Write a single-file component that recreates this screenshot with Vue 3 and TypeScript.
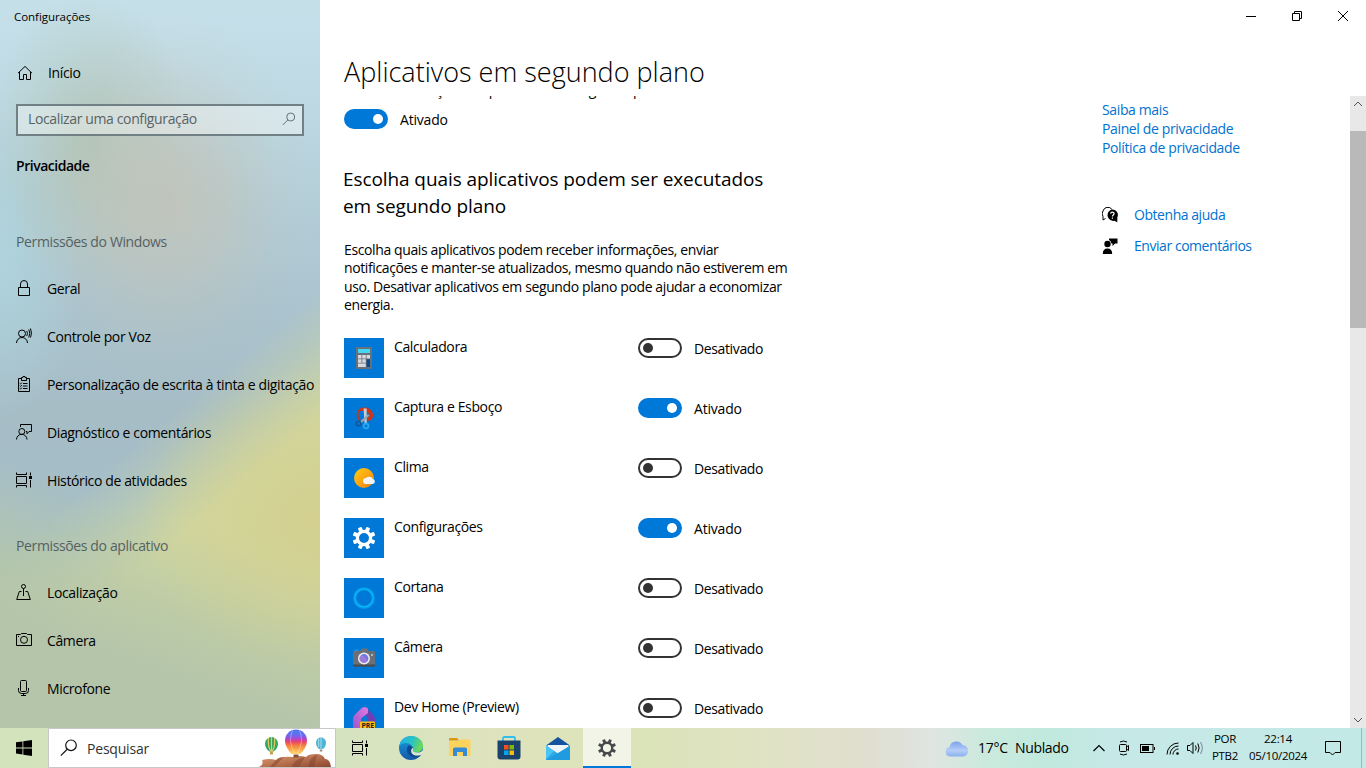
<script setup lang="ts">
interface NavItem { label: string; icon: string }
interface AppRow { name: string; icon: string; on: boolean }

const windowsItems: NavItem[] = [
  { label: 'Geral', icon: 'lock' },
  { label: 'Controle por Voz', icon: 'voice' },
  { label: 'Personalização de escrita à tinta e digitação', icon: 'clipboard' },
  { label: 'Diagnóstico e comentários', icon: 'feedback' },
  { label: 'Histórico de atividades', icon: 'history' },
]
const appItems: NavItem[] = [
  { label: 'Localização', icon: 'location' },
  { label: 'Câmera', icon: 'camera' },
  { label: 'Microfone', icon: 'mic' },
]
const groups = [
  { title: 'Permissões do Windows', items: windowsItems },
  { title: 'Permissões do aplicativo', items: appItems },
]
const apps: AppRow[] = [
  { name: 'Calculadora', icon: 'calc', on: false },
  { name: 'Captura e Esboço', icon: 'snip', on: true },
  { name: 'Clima', icon: 'weather', on: false },
  { name: 'Configurações', icon: 'gear', on: true },
  { name: 'Cortana', icon: 'cortana', on: false },
  { name: 'Câmera', icon: 'photo', on: false },
  { name: 'Dev Home (Preview)', icon: 'dev', on: false },
]
const teeth = [0, 45, 90, 135, 180, 225, 270, 315]
</script>

<template>
  <div class="screen">
    <div class="window">
      <aside class="sidebar">
        <div class="app-title">Configurações</div>
        <div class="home">
          <svg class="ico" width="16" height="16" viewBox="0 0 16 16"><path d="M1 8.2 8 1.4l7 6.800M2.500 7v7.500H6.500v-5h3v5h4V7" /></svg>
          <span>Início</span>
        </div>
        <div class="search">
          <span>Localizar uma configuração</span>
          <svg width="14" height="14" viewBox="0 0 14 14"><circle cx="8.700" cy="5" r="4" /><path d="M5.900 7.900.8 13" /></svg>
        </div>
        <div class="section">Privacidade</div>
        <div v-for="(g, gi) in groups" :key="g.title" class="group" :class="{ second: gi === 1 }">
          <div class="group-title">{{ g.title }}</div>
          <div v-for="item in g.items" :key="item.label" class="nav-item">
            <svg class="ico" width="16" height="16" viewBox="0 0 16 16">
              <path v-if="item.icon === 'lock'" d="M2.500 7.500h11v8h-11zM4.500 7.500V4a3.500 3.500 0 0 1 7 0v3.500" />
              <g v-else-if="item.icon === 'voice'">
                <circle cx="6" cy="5.500" r="3.500" /><path d="M.5 15a5.500 5.500 0 0 1 11 0M10.800 3q1.300 2.500 0 5M12.800 1.500q2 3.500 0 8M14.500.5q2 5 0 9" />
              </g>
              <g v-else-if="item.icon === 'clipboard'">
                <path d="M5 2.500H2.500v13h11v-13H11M5.500 1.500h1.500v-1h2v1h1.500v3h-5zM7 7.500h4.500M7 10h4.500M7 12.500h4.500" /><path d="m3.700 7.300.8.8 1.300-1.500M3.700 9.800l.8.8 1.300-1.500M3.700 12.300l.8.8 1.300-1.500" />
              </g>
              <g v-else-if="item.icon === 'feedback'">
                <circle cx="5.800" cy="7.500" r="3" /><path d="M.5 15.500a5.200 5.200 0 0 1 10.500 0M4.500 3V.5h11v7h-2.500l-2 2.300V7.500h-1" />
              </g>
              <g v-else-if="item.icon === 'history'">
                <path d="M.5 4.500h10v7H.5zM.5.5v2h10v-2M.5 15.500v-2h10v2M14.500.5v3M14.500 8v7.500" /><path class="solid" d="M13 4h3v3h-3z" />
              </g>
              <g v-else-if="item.icon === 'location'">
                <circle cx="7.500" cy="2.500" r="2" /><path d="M7.500 4.500V12M5.500 7.500H3.300L.7 15.500h13.600l-2.600-8H9.500" />
              </g>
              <g v-else-if="item.icon === 'camera'">
                <path d="M.5 2.500H4.500l1-1h5l1 1h4v11H.5z" /><circle cx="8" cy="7.800" r="3.500" /><path d="M2 4.500h1" />
              </g>
              <g v-else>
                <rect x="4.500" y=".5" width="6" height="11" rx="1" /><path d="M2.500 8v2.500q0 3 3 3h4q3 0 3-3V8M7.500 13.500v2M5 15.500h5" />
              </g>
            </svg>
            <span>{{ item.label }}</span>
          </div>
        </div>
      </aside>

      <main class="main">
        <header class="header">
          <div class="controls">
            <svg width="46" height="32" viewBox="0 0 46 32"><path d="M18 16.500h10" /></svg>
            <svg width="46" height="32" viewBox="0 0 46 32"><path d="M18.500 13.500h7v7h-7zM20.500 13.500v-2h7v7h-2" /></svg>
            <svg width="46" height="32" viewBox="0 0 46 32"><path d="m18 11 10 10M28 11 18 21" /></svg>
          </div>
          <h1>Aplicativos em segundo plano</h1>
        </header>
        <div class="scroller">
          <section class="content">
            <p class="clipped">Permitir execução de aplicativos em segundo plano</p>
            <div class="master"><i class="toggle on"></i><span>Ativado</span></div>
            <h2>Escolha quais aplicativos podem ser executados<br />em segundo plano</h2>
            <p class="desc">Escolha quais aplicativos podem receber informações, enviar<br />notificações e manter-se atualizados, mesmo quando não estiverem em<br />uso. Desativar aplicativos em segundo plano pode ajudar a economizar<br />energia.</p>
            <div v-for="app in apps" :key="app.name" class="app-row">
              <div class="tile">
                <svg width="24" height="24" viewBox="0 0 24 24">
                  <g v-if="app.icon === 'calc'">
                    <rect x="4" y="1" width="16" height="22" rx="1" fill="#68717a" /><rect x="6" y="3" width="12" height="4" fill="#43d6f5" />
                    <path d="M6 9h3.500v3.500H6zM10.300 9h3.500v3.500h-3.500zM14.600 9H18v3.500h-3.400zM6 13.300h3.500v3.500H6zM10.300 13.300h3.500v3.500h-3.500zM6 17.600h7.800V21H6z" fill="#d7dbe0" /><path d="M14.600 13.300H18V21h-3.400z" fill="#0b4a91" />
                  </g>
                  <g v-else-if="app.icon === 'snip'">
                    <path d="M8 14.500C4 10 5 3.500 11 3" fill="none" stroke="#b93a22" stroke-width="1.800" />
                    <path d="M8 2.500Q10 1 13 1.500c5 .3 8.500 4 8 8.500-.3 3.500-3 5.500-6.500 5l.5-3.500c2 0 2.500-2 1.500-4C15 4.800 11 5 7 5z" fill="#cf3516" />
                    <path d="M11.500 2.500h3.200V18h-2z" fill="#c9ced2" /><path d="m17.500 9.500-8.500 8-1.500-1.800 8.500-7.500z" fill="#9aa5ae" />
                    <circle cx="6.500" cy="17.500" r="2.300" fill="none" stroke="#15559b" stroke-width="1.600" /><circle cx="14" cy="20" r="2.400" fill="none" stroke="#29a7ef" stroke-width="1.800" />
                  </g>
                  <g v-else-if="app.icon === 'weather'">
                    <defs><linearGradient id="sun" x1="0" y1="0" x2="1" y2="1"><stop offset="0" stop-color="#ffcd0f" /><stop offset="1" stop-color="#f47e16" /></linearGradient></defs>
                    <circle cx="12" cy="12" r="10" fill="url(#sun)" /><path d="M14 18a3 3 0 0 1 0-6 4.500 4.500 0 0 1 7 1 2.600 2.600 0 0 1 0 5z" fill="#f1f4f7" />
                  </g>
                  <g v-else-if="app.icon === 'gear'" fill="#fff">
                    <rect v-for="a in teeth" :key="a" x="10" y="0.600" width="4" height="6" rx=".8" :transform="`rotate(${a + 22.5} 12 12)`" />
                    <circle cx="12" cy="12" r="6.600" fill="none" stroke="#fff" stroke-width="3.200" />
                  </g>
                  <g v-else-if="app.icon === 'cortana'" fill="none">
                    <circle cx="12" cy="12" r="9.300" stroke="#0798e8" stroke-width="3" /><circle cx="12" cy="12" r="9" stroke="#06b5f7" stroke-width="1.500" />
                  </g>
                  <g v-else-if="app.icon === 'photo'">
                    <path d="M1 6q0-1 1-1h6l2-2.500h5L17 5h5q1 0 1 1v14H1z" fill="#6a7076" /><path d="M1 18.500h22V20q0 .8-1 .8H2q-1 0-1-.8z" fill="#484d52" /><path d="M2 5q0-1.500 1.500-1.500H6L7 5z" fill="#1897ee" />
                    <circle cx="12" cy="12.500" r="6" fill="#ebecef" /><circle cx="12" cy="12.500" r="4.400" fill="#7178dd" /><path d="M8.800 15.500a4.400 4.400 0 0 1 0-6 6 6 0 0 1 6 6 4.400 4.400 0 0 1-6 0" fill="#b27bd8" opacity=".7" /><circle cx="20" cy="9" r=".9" fill="#d3d7db" />
                  </g>
                  <g v-else>
                    <defs><linearGradient id="dev" x1="1" y1="0" x2="0" y2="1"><stop offset="0" stop-color="#e07be0" /><stop offset="1" stop-color="#9a52cf" /></linearGradient></defs>
                    <path d="m12 1.500 3 1 6 6q2 2 2 4.500v11h-7V12l-4-4z" fill="#6d3fb5" />
                    <path d="M1 13q0-2.500 2-4.500l7-6.700q3-2 6 .7V7l-7 5.500V24H4q-3 0-3-3z" fill="url(#dev)" />
                    <rect x="8" y="15.500" width="15" height="9" rx="1" fill="#ffc20a" />
                    <text x="9.500" y="21.700" class="pre">PRE</text>
                  </g>
                </svg>
              </div>
              <span class="app-name">{{ app.name }}</span>
              <i class="toggle" :class="{ on: app.on }"></i>
              <span class="state">{{ app.on ? 'Ativado' : 'Desativado' }}</span>
            </div>
          </section>
          <section class="links">
            <a>Saiba mais</a><a>Painel de privacidade</a><a>Política de privacidade</a>
            <div class="help first">
              <svg width="16" height="16" viewBox="0 0 16 16"><path d="M3.500 11.500 1 13V9.500A5 5 0 0 1 1 4a5 5 0 0 1 9-1.500" fill="none" stroke="#000" /><path d="M10.300 2.500a5.500 5.500 0 0 1 5 8v4.800l-3-1.500A5.600 5.600 0 1 1 10.300 2.500" /><path d="M8.600 6.700q.2-1.500 1.800-1.500t1.700 1.400c0 1.400-1.700 1.300-1.700 2.900M10.400 10.500v1.200" fill="none" stroke="#fff" stroke-width="1.200" /></svg>
              <a>Obtenha ajuda</a>
            </div>
            <div class="help">
              <svg width="16" height="16" viewBox="0 0 16 16"><circle cx="5.500" cy="6" r="3.200" /><path d="M.8 16q0-5.500 4.700-5.500t4.700 5.500zM7 .5h8.500v5h-2.500L10.500 8V5.500H9.500Q9 2.500 7 2z" /></svg>
              <a>Enviar comentários</a>
            </div>
          </section>
          <div class="scrollbar">
            <svg width="16" height="16" viewBox="0 0 16 16"><path d="m4 10 4-4 4 4" /></svg>
            <div class="thumb"></div>
            <svg class="down" width="16" height="16" viewBox="0 0 16 16"><path d="m4 6 4 4 4-4" /></svg>
          </div>
        </div>
      </main>
    </div>

    <footer class="taskbar">
      <div class="start"><svg width="16" height="16" viewBox="0 0 16 16"><path d="m0 2.300 6.500-.9v6.100H0zM7.300 1.300 16 0v7.500H7.300zM0 8.400h6.500v6.100L0 13.600zM7.300 8.400H16V16l-8.700-1.200z" /></svg></div>
      <div class="tb-search">
        <svg class="lens" width="18" height="18" viewBox="0 0 18 18"><circle cx="11" cy="6.300" r="5.300" /><path d="M7.200 10.300.8 16.600" /></svg>
        <span>Pesquisar</span>
        <svg class="balloons" width="74" height="38" viewBox="0 0 74 38">
          <defs>
            <linearGradient id="bal" x1="0" y1="0" x2="0" y2="1"><stop offset="0" stop-color="#4b7cf3" /><stop offset=".25" stop-color="#6d68ee" /><stop offset=".38" stop-color="#b045cf" /><stop offset=".5" stop-color="#ea4269" /><stop offset=".68" stop-color="#f58a3b" /><stop offset="1" stop-color="#ffd66b" /></linearGradient>
            <linearGradient id="rock" x1="0" y1="0" x2="1" y2="1"><stop offset="0" stop-color="#e0a078" /><stop offset=".5" stop-color="#b97350" /><stop offset="1" stop-color="#8a4630" /></linearGradient>
          </defs>
          <path d="M0 38q5-2 3-7 8-2 14 0 3-4 17-3 7-2 13 0 2-3 10-3 7 0 9 5 5 0 6 8z" fill="url(#rock)" />
          <path d="M17 31q4-3 8-3L15 38h-4zM33 38q2-8 13-10l-6 10zM50 38q0-10 8-12l-3 12z" fill="#7d3d2b" opacity=".45" />
          <path d="M26 11.500a11 11 0 0 1 22 0q0 6.500-6.500 13.500h-9q-6.500-7-6.500-13.500" fill="url(#bal)" /><path d="M33.500 1.500q-5 10 2 23M40.500 1.500q5 10-2 23" fill="none" stroke="#fff" stroke-opacity=".35" /><path d="M34.500 25.500h5v3h-5z" fill="#845138" />
          <path d="M6 14.500a6.500 6.500 0 0 1 13 0q0 5-4.500 8h-4q-4.500-3-4.500-8" fill="#2fa765" /><path d="M12.500 8v14M9.500 9q-1 7 2 13M15.500 9q1 7-2 13" stroke="#ecc75b" stroke-width="1.200" fill="none" /><path d="M11 22.500h3v3h-3z" fill="#c7a24d" />
          <path d="M57 13.500a5 5 0 0 1 10 0q0 4-3 6.500h-4q-3-2.500-3-6.500" fill="#4fb2d7" /><path d="M62 9v11M59.700 10v8" stroke="#a8e0ef" /><path d="M60.800 20.500h2.500v2h-2.500z" fill="#98837a" />
        </svg>
      </div>
      <div class="task"><svg class="ico" width="16" height="16" viewBox="0 0 16 16"><path d="M.5 4.500h10v7H.5zM.5.5v2h10v-2M.5 15.500v-2h10v2M14.500.5v3M14.500 8v7.500" /><path class="solid" d="M13 4h3v3h-3z" /></svg></div>
      <div class="task edge">
        <svg width="24" height="24" viewBox="0 0 24 24"><defs><linearGradient id="ed" x1="0" y1="0" x2="1" y2=".3"><stop offset="0" stop-color="#1bafe8" /><stop offset=".6" stop-color="#2bc3c2" /><stop offset="1" stop-color="#6bd957" /></linearGradient><linearGradient id="eb" x1="0" y1="0" x2="0" y2="1"><stop offset="0" stop-color="#1b9de2" /><stop offset="1" stop-color="#1259a8" /></linearGradient></defs>
          <circle cx="12" cy="12" r="12" fill="url(#eb)" /><path d="M.5 9.500C2 3.500 6.500 0 12 0c7 0 12 4.500 12 10 0 4-3 6.500-6.500 6.500-3 0-4.500-1.200-3.200-3.200C15.500 9.500 7 3.500.5 9.500" fill="url(#ed)" /><path d="M9.500 9.500C6 13.500 8 20 15 21.500c3 .5 5.500-.8 7-2-2 .8-4.500.7-6.500-.3-3.500-1.500-4.500-5-2-7.200-.5-1.800-2-2.700-4-2.500" fill="#114a8b" /><path d="M13.600 12c-2.500 2-1.500 5.500.9 6.700 3 1.400 6 1 8.500-.7l1.500-.5v-4c-1.500 2.400-4 3.200-7 3-3-.1-4.500-1.200-3.200-3.200q.3-.7-.7-1.300" fill="#dce7cd" /></svg>
      </div>
      <div class="task"><svg width="22" height="20" viewBox="0 0 22 20"><path d="M0 1q0-1 1-1h7l2 2.500H0z" fill="#dc9511" /><path d="M0 3h9l2-1.500h9q1.500 0 1.500 1.500v15H0z" fill="#ffd25b" /><path d="M4 18v-7q0-1.500 1.500-1.500h11q1.500 0 1.500 1.500v7h-4v-4H8v4z" fill="#368bd5" /></svg></div>
      <div class="task"><svg width="24" height="24" viewBox="0 0 24 24"><path d="M6 5V2.500Q6 1 7.500 1h9Q18 1 18 2.500V5" fill="none" stroke="#31bdf0" stroke-width="1.800" /><path d="M.5 4.500h23v16q0 3-3 3h-17q-3 0-3-3z" fill="#1b426b" /><path d="M7 9h4.500v4.500H7z" fill="#f15122" /><path d="M12.500 9H17v4.500h-4.500z" fill="#7eb900" /><path d="M7 14.500h4.500V19H7z" fill="#05a6f0" /><path d="M12.500 14.500H17V19h-4.500z" fill="#feba08" /></svg></div>
      <div class="task"><svg width="24" height="23" viewBox="0 0 24 23"><path d="M0 8.500 12 0l12 8.500z" fill="#12529e" /><path d="M2 8h20v8H2z" fill="#eef4f7" /><path d="m0 8.500 12 8L24 8.500V23H0z" fill="#2ca9e9" /><path d="M0 23 24 9v14z" fill="#209bdf" /><path d="m0 8.500 8 5.500-8 8z" fill="#49c4f5" /></svg></div>
      <div class="task active"><svg width="18" height="18" viewBox="0 0 24 24" fill="#45494a"><rect v-for="a in teeth" :key="a" x="10" y="0" width="4" height="6" rx=".5" :transform="`rotate(${a + 22.5} 12 12)`" /><circle cx="12" cy="12" r="7" fill="none" stroke="#45494a" stroke-width="3.200" /></svg></div>
      <div class="tray">
        <svg class="cloud" width="24" height="17" viewBox="0 0 24 17"><defs><linearGradient id="cl" x1="0" y1="0" x2="0" y2="1"><stop offset="0" stop-color="#7ba3ea" /><stop offset=".6" stop-color="#b5cdf7" /><stop offset="1" stop-color="#8bb0ef" /></linearGradient></defs><path d="M5 16.500a4.700 4.700 0 0 1-.5-9.300A7 7 0 0 1 17.500 5a5.800 5.800 0 0 1 1 11.500z" fill="url(#cl)" /></svg>
        <span class="temp">17°C</span><span class="cond">Nublado</span>
        <svg class="ti chev" width="12" height="8" viewBox="0 0 12 8"><path d="m.5 7 5.500-5.500L11.500 7" stroke-width="1.200" /></svg>
        <svg class="ti cam" width="12" height="16" viewBox="0 0 12 16"><rect x="1.500" y="4.500" width="7" height="7" rx="1" /><path d="m8.500 7 2-1.500v5l-2-1.500M2 2q3.500-2 7 0M2 14q3.500 2 7 0" /></svg>
        <svg class="ti bat" width="15" height="9" viewBox="0 0 15 9"><rect x=".5" y=".5" width="12.500" height="8" /><path d="M14.500 3v3" /><path d="M2 2h7v5H2z" fill="#000" stroke="none" /></svg>
        <svg class="ti wifi" width="13" height="13" viewBox="0 0 13 13"><path d="M1 12.500A11.500 11.500 0 0 1 12.500 1M4 12.500A8.500 8.500 0 0 1 12.500 4M7 12.500A5.500 5.500 0 0 1 12.500 7" /><circle cx="11.500" cy="11.500" r="1.300" fill="#000" stroke="none" /></svg>
        <svg class="ti vol" width="17" height="14" viewBox="0 0 17 14"><path d="M.5 4.500h2.500l3-3v11l-3-3H.5zM8.500 4.500q1.500 2.500 0 5M10.800 2.500q2.600 4.500 0 9" /><path d="M13.500 1q3.600 6 0 12" stroke="#789" /></svg>
        <div class="lang"><span>POR</span><span>PTB2</span></div>
        <div class="clock"><span>22:14</span><span>05/10/2024</span></div>
        <svg class="ti note" width="16" height="17" viewBox="0 0 16 17"><path d="M.5 1.500h15v11H10l-2.500 2.500L5 12.500H.5z" /></svg>
        <div class="peek"></div>
      </div>
    </footer>
  </div>
</template>

<style>
html, body { margin: 0; overflow: hidden; }
</style>

<style scoped>
* { box-sizing: border-box; }
.screen { width: 1366px; height: 768px; display: flex; flex-direction: column; overflow: hidden; font: 14px/20px "Open Sans", "Noto Sans", sans-serif; color: #000; background: #fff; letter-spacing: -0.37px; }
.window { display: flex; height: 728px; }
svg { display: block; flex: none; }
.ico { fill: none; stroke: #000; stroke-width: 1; }
.ico .solid { fill: #000; stroke: none; }
.sidebar {
  width: 320px; height: 728px; overflow: hidden; flex: none; white-space: nowrap;
  background:
    radial-gradient(ellipse 150px 190px at 165px 200px, rgba(195, 194, 180, .8), rgba(195, 194, 180, .5) 40%, rgba(195, 194, 180, .12) 75%, rgba(195, 194, 180, 0)),
    radial-gradient(ellipse 100px 150px at 90px 140px, rgba(170, 190, 165, .65), rgba(170, 190, 165, .3) 50%, rgba(170, 190, 165, 0)),
    radial-gradient(ellipse 80px 150px at 0 270px, rgba(174, 214, 222, .8), rgba(174, 214, 222, 0)),
    radial-gradient(ellipse 180px 150px at 320px 520px, rgba(213, 207, 138, .8), rgba(213, 207, 138, 0)),
    linear-gradient(200deg, rgba(182, 199, 168, 0) 68%, rgba(182, 199, 168, .75) 79%, #b5c5aa 87%),
    linear-gradient(140deg, rgba(206, 214, 160, 0) 56%, rgba(206, 214, 160, .35) 61%, #d0d7a1 69%, #cdd5a2 100%),
    linear-gradient(180deg, #c6e0ea 0, #bfdae4 90px, #b4ced8 200px, #abc4cf 300px, #a6bdc6 410px, #a4bec8 540px, #a9c3bd 610px, #b5c9a2 728px);
}
.app-title { font-size: 11.500px; line-height: 16px; padding: 9px 0 0 14px; height: 49px; letter-spacing: -.05px; }
.home { height: 48px; display: flex; align-items: center; padding-left: 17px; gap: 15px; }
.search { width: 288px; height: 32px; margin: 7px 0 0 16px; border: 2px solid #708084; background: rgba(255, 255, 255, .4); display: flex; align-items: center; justify-content: space-between; padding: 0 6px 2px 10px; color: #586367; }
.search svg { fill: none; stroke: #657276; }
.section { margin: 20px 0 0 16px; font-weight: 600; line-height: 20px; letter-spacing: -.47px; }
.group { padding-top: 56px; }
.group.second { padding-top: 31px; }
.group-title { padding-left: 16px; line-height: 20px; color: #566163; margin-bottom: 13px; }
.nav-item { height: 48px; display: flex; align-items: center; padding-left: 16px; gap: 15px; }
.nav-item svg { margin-bottom: 2px; }

.main { flex: 1; display: flex; flex-direction: column; min-width: 0; }
.header { height: 96px; }
.controls { display: flex; justify-content: flex-end; height: 32px; }
.controls svg { fill: none; stroke: #000; }
h1 { margin: 20px 0 0 24px; font-weight: 300; font-size: 27px; line-height: 40px; letter-spacing: 0; white-space: nowrap; }
.scroller { width: 1046px; height: 632px; overflow: hidden; display: flex; }
.content { width: 758px; padding-left: 24px; flex: none; white-space: nowrap; }
.clipped { margin: -16px 0 0; line-height: 20px; height: 20px; letter-spacing: -.2px; }
.master { display: flex; margin-top: 9px; height: 22px; gap: 12px; }
.master span { padding-top: 1px; letter-spacing: -.2px; }
.toggle { display: block; width: 44px; height: 20px; border-radius: 10px; border: 2px solid #333; padding: 3px; flex: none; }
.toggle::before { content: ""; display: block; width: 10px; height: 10px; border-radius: 50%; background: #333; }
.toggle.on { background: #0078d7; border-color: #0078d7; }
.toggle.on::before { background: #fff; margin-left: 24px; }
h2 { font-weight: 400; font-size: 19px; line-height: 27px; margin: 35px 0 0 -1px; letter-spacing: -.09px; }
.desc { margin: 21px 0 0; line-height: 18.400px; height: 97px; letter-spacing: -.385px; }
.app-row { height: 60px; display: flex; align-items: flex-start; }
.tile { width: 40px; height: 40px; background: #0078d7; display: grid; place-items: center; }
.app-name { width: 254px; padding-left: 10px; margin-top: -1px; }
.state { padding: 1px 0 0 12px; }
.toggle.on + .state { letter-spacing: -.2px; }
.pre { font: 700 7px "Open Sans", sans-serif; fill: #222; letter-spacing: -.1px; }
.links { width: 272px; padding: 4px 0 0 24px; }
.links a { display: block; color: #0072cf; line-height: 19px; }
.help { display: flex; align-items: center; gap: 16px; height: 31px; letter-spacing: -.45px; }
.help.first { margin-top: 42px; }
.scrollbar { width: 16px; height: 632px; background: #e8e8e8; display: flex; flex-direction: column; }
.scrollbar svg { fill: none; stroke: #555; }
.thumb { height: 197px; background: #b9b9b9; margin-top: 19px; }
.down { margin-top: auto; }

.taskbar { height: 40px; display: flex; background: linear-gradient(90deg, #d3e3bb 0, #d6e3c1 350px, #dfe3bd 500px, #dbe3b9 650px, #e0e2c5 780px, #dfded0 870px, #e0e5e2 930px, #c9eadd 990px, #c1e9dd 1050px, #c6e9e8 1120px, #c2e9e6 1366px); }
.start { width: 48px; display: grid; place-items: center; }
.tb-search { width: 288px; height: 40px; background: #fff; border: 1px solid #c8c8c8; display: flex; align-items: center; padding-left: 11px; gap: 9px; color: #333; letter-spacing: -.2px; }
.tb-search span { padding-top: 2px; }
.balloons { margin: 0 2px 0 auto; }
.lens { fill: none; stroke: #111; stroke-width: 1.200; }
.task { width: 48px; margin-right: 1px; display: grid; place-items: center; }
.task.edge { margin-left: 2px; }
.task.active { background: #f3f4e8; border-bottom: 2px solid #0078d7; padding-top: 2px; }
.tray { margin-left: auto; display: flex; align-items: center; white-space: nowrap; height: 40px; }
.ti { fill: none; stroke: #000; }
.temp { width: 37px; margin-left: 9px; letter-spacing: -.25px; }
.cond { width: 78px; letter-spacing: -.35px; }
.cam { margin-left: 13px; }
.bat { margin-left: 10px; }
.wifi { margin-left: 11px; }
.vol { margin-left: 8px; }
.lang, .clock { display: flex; flex-direction: column; align-items: center; font-size: 11.500px; line-height: 17px; letter-spacing: -.3px; padding-bottom: 2px; }
.lang { width: 32px; margin-left: 5px; }
.clock { width: 62px; margin-left: 6px; }
.note { margin-left: 16px; }
.peek { height: 40px; width: 5px; margin-left: 20px; border-left: 1px solid #9bb9b8; }
</style>
